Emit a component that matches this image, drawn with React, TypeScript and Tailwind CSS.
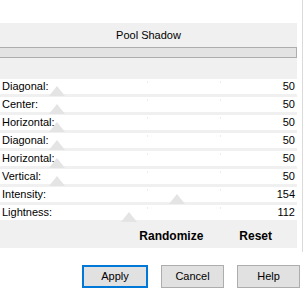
import React from 'react';

interface Setting {
  label: string;
  value: number;
}

const settings: Setting[] = [
  { label: 'Diagonal:', value: 50 },
  { label: 'Center:', value: 50 },
  { label: 'Horizontal:', value: 50 },
  { label: 'Diagonal:', value: 50 },
  { label: 'Horizontal:', value: 50 },
  { label: 'Vertical:', value: 50 },
  { label: 'Intensity:', value: 154 },
  { label: 'Lightness:', value: 112 },
];

const SliderRow: React.FC<Setting> = ({ label, value }) => {
  // thumb sits under the row, spread over the 0..255 range
  const left = Math.round((value / 255) * 293) - 8;
  return (
    <div className="relative h-[15px] bg-white flex items-center justify-between px-[2px] text-[11px] leading-none text-black">
      {/* faint tick marks */}
      <span className="absolute left-[147px] top-[2px] w-px h-[2px] bg-[#ececec]" />
      <span className="absolute left-[220px] top-[2px] w-px h-[2px] bg-[#ececec]" />
      <svg
        className="absolute bottom-[-2px]"
        style={{ left }}
        width="16"
        height="10"
        viewBox="0 0 16 10"
      >
        <polygon points="8,0 16,10 0,10" fill="#e4e4e4" />
      </svg>
      <span className="relative">{label}</span>
      <span className="relative">{value}</span>
    </div>
  );
};

const Button: React.FC<{ label: string; primary?: boolean; width: string }> = ({ label, primary, width }) => (
  <button
    className={`h-[23px] ${width} bg-[#e1e1e1] text-[11px] text-black flex items-center justify-center ${
      primary ? 'border-2 border-[#0078d7]' : 'border border-[#adadad]'
    }`}
  >
    {label}
  </button>
);

const App: React.FC = () => {
  return (
    <div
      className="w-[305px] h-[297px] bg-white flex overflow-hidden"
      style={{ fontFamily: '"Liberation Sans", Arial, sans-serif' }}
    >
      <div className="w-[302px] flex flex-col">
        <div className="h-[23px]" />
        <div className="w-[297px] bg-[#f0f0f0] flex flex-col">
          <div className="h-[24px] flex items-center justify-center text-[11px] text-black">Pool Shadow</div>
          <div className="h-[11px] bg-[#e3e3e3] border border-l-0 border-[#adadad]" />
          <div className="h-[21px]" />
          <div className="flex flex-col gap-[3px]">
            {settings.map((s, i) => (
              <SliderRow key={i} label={s.label} value={s.value} />
            ))}
          </div>
          <div className="h-[28px] pt-[3px] flex items-center justify-end gap-[36px] pr-[25px] text-[12px] font-bold text-black">
            <span>Randomize</span>
            <span>Reset</span>
          </div>
        </div>
        <div className="flex justify-end gap-[13px] pt-[17px] pr-[2px]">
          <Button label="Apply" primary width="w-[66px]" />
          <Button label="Cancel" width="w-[63px]" />
          <Button label="Help" width="w-[63px]" />
        </div>
      </div>
      <div className="w-px h-[252px] bg-[#dadada]" />
    </div>
  );
};

export default App;
